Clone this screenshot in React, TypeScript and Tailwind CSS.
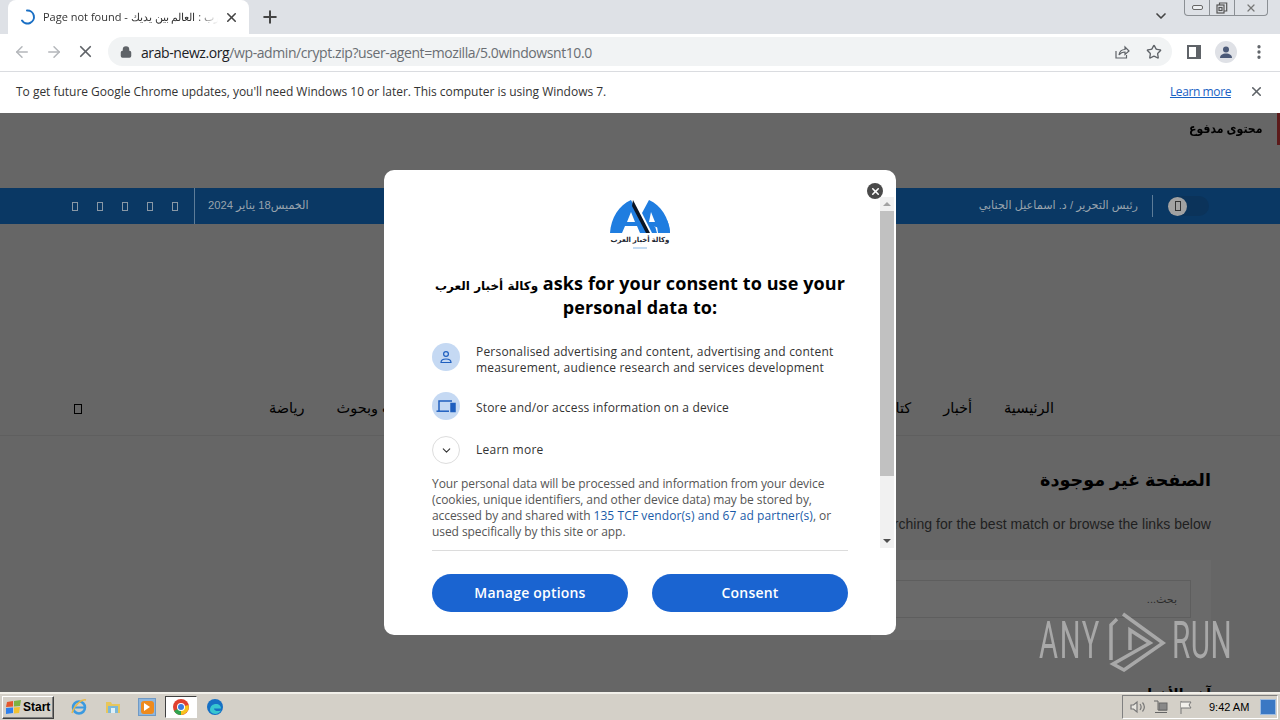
import { ArrowLeft, ArrowRight, ChevronDown, Lock, MoreVertical, Plus, Star, X } from "lucide-react";

function GlyphBox({ className }: { className: string }) {
  return <span className={`block border ${className}`} />;
}

function TabStrip() {
  return (
    <div className="h-[34px] bg-[#dee1e6] flex items-stretch relative shrink-0">
      <div className="ml-[8px] w-[241px] bg-white rounded-t-[8px] flex items-center pl-[12px] pr-[10px]">
        <svg width="16" height="16" viewBox="0 0 16 16" fill="none" className="shrink-0">
          <path d="M7 1.500A6.500 6.500 0 1 1 2 11.500" stroke="#1a6fc4" strokeWidth="2" strokeLinecap="round" />
        </svg>
        <div className="ml-[7px] w-[175px] mr-auto whitespace-nowrap overflow-hidden text-[11px] text-[#333] font-['Open_Sans',sans-serif] leading-[16px] [mask-image:linear-gradient(to_right,black_88%,transparent)]">
          Page not found - وكالة أخبار العرب : العالم بين يديك
        </div>
        <X size={15} strokeWidth={2.5} className="text-[#444] shrink-0" />
      </div>
      <div className="ml-[11px] flex items-center">
        <Plus size={20} strokeWidth={2.4} className="text-[#444]" />
      </div>
      <div className="flex-1" />
      <div className="flex items-center mr-[15px] mb-[2px]">
        <ChevronDown size={16} strokeWidth={2.5} className="text-[#444]" />
      </div>
      <div className="w-[84px] h-[16px] mr-[12px] border border-t-0 border-[#8b8f94] rounded-b-[4px] flex text-[#555]">
        <div className="w-[25px] border-r border-[#8b8f94] flex items-center justify-center">
          <span className="block w-[11px] h-[5px] border border-[#666] rounded-[2px] bg-[#eef0f3]" />
        </div>
        <div className="w-[25px] border-r border-[#8b8f94] flex items-center justify-center">
          <svg width="12" height="12" viewBox="0 0 12 12" fill="none" stroke="#555" strokeWidth="1.2">
            <rect x="1" y="3" width="7" height="8" />
            <path d="M3.500 3V1h7.200v8H8" />
            <rect x="3" y="5.500" width="3" height="3" />
          </svg>
        </div>
        <div className="flex-1 flex items-center justify-center">
          <X size={12} strokeWidth={2.5} className="text-[#777]" />
        </div>
      </div>
    </div>
  );
}

function Toolbar() {
  return (
    <div className="h-[38px] bg-white border-b border-[#dadce0] flex items-center shrink-0 pb-[2px]">
      <ArrowLeft size={18} strokeWidth={2} className="ml-[13px] text-[#b4b7bb]" />
      <ArrowRight size={18} strokeWidth={2} className="ml-[14px] text-[#b4b7bb]" />
      <X size={19} strokeWidth={2.2} className="ml-[13px] text-[#5f6368]" />
      <div className="ml-[13px] w-[1064px] h-[29px] rounded-full bg-[#f1f3f4] flex items-center pl-[12px] pr-[10px]">
        <Lock size={12} strokeWidth={3} className="text-[#5f6368] shrink-0" fill="#5f6368" />
        <div className="ml-[9px] pt-[1px] flex-1 text-[14px] whitespace-nowrap font-['Open_Sans',sans-serif] tracking-[-0.41px] text-[#6a6e73]">
          <span className="text-[#202124]">arab-newz.org</span>/wp-admin/crypt.zip?user-agent=mozilla/5.0windowsnt10.0
        </div>
        <svg width="16" height="16" viewBox="0 0 16 16" fill="none" stroke="#5f6368" strokeWidth="1.2" className="shrink-0">
          <path d="M2 7v7h10.500v-3" />
          <path d="M5 11c.5-3.500 3-5.500 6-5.500V3l4 4-4 3.500V8c-2.500 0-4.500 1-6 3z" />
        </svg>
        <Star size={16} strokeWidth={2} className="ml-[16px] text-[#5f6368] shrink-0" />
      </div>
      <div className="ml-[15px] w-[14px] h-[14px] border-2 border-[#5f6368] flex justify-start shrink-0">
        <span className="block w-[7px] h-full bg-white" />
        <span className="block w-[3px] h-full bg-[#5f6368]" />
      </div>
      <div className="ml-[14px] w-[22px] h-[22px] rounded-full bg-[#dfe1e6] flex items-center justify-center shrink-0">
        <svg width="14" height="14" viewBox="0 0 14 14" fill="#4c5a78">
          <circle cx="7" cy="4.500" r="3" />
          <path d="M1 13c0-3 2.500-4.500 6-4.500S13 10 13 13z" />
        </svg>
      </div>
      <MoreVertical size={18} strokeWidth={2.4} className="ml-[13px] text-[#5f6368] shrink-0" />
    </div>
  );
}

function InfoBar() {
  return (
    <div className="h-[41px] bg-white flex items-center pl-[16px] pr-[16px] pb-[2px] shrink-0 font-['Open_Sans',sans-serif] text-[12px]">
      <span className="text-[#333] flex-1 tracking-[-0.02px]">To get future Google Chrome updates, you'll need Windows 10 or later. This computer is using Windows 7.</span>
      <a className="text-[#1a62c4] underline tracking-[-0.4px]">Learn more</a>
      <X size={15} strokeWidth={2.5} className="ml-[18px] text-[#5f6368]" />
    </div>
  );
}

function PageBehind() {
  return (
    <div className="flex flex-col h-full font-['Liberation_Sans','DejaVu_Sans',sans-serif]">
      <div className="h-[75px] flex justify-end shrink-0">
        <div dir="rtl" className="text-[13px] font-bold text-black mr-[14px] mt-[6px] h-[20px] scale-x-[0.84] origin-right">محتوى مدفوع</div>
        <div className="w-[3px] h-[32px] bg-[#5c1a1a]" />
      </div>
      <div className="h-[36px] bg-[#0a3864] flex items-center justify-between shrink-0 pl-[72px] pr-[71px] text-[#98a3ad] text-[11.2px]">
        <div className="flex items-center">
          <div className="flex gap-[19px] pr-[16px] border-r border-[#5d7c98] h-[36px] items-center">
            <GlyphBox className="w-[6px] h-[9px] border-[#8a98a5]" />
            <GlyphBox className="w-[6px] h-[9px] border-[#8a98a5]" />
            <GlyphBox className="w-[6px] h-[9px] border-[#8a98a5]" />
            <GlyphBox className="w-[6px] h-[9px] border-[#8a98a5]" />
            <GlyphBox className="w-[6px] h-[9px] border-[#8a98a5]" />
          </div>
          <span dir="rtl" className="ml-[13px] mb-[1px]">الخميس18 يناير 2024</span>
        </div>
        <div className="flex items-center">
          <span dir="rtl" className="mb-[1px]">رئيس التحرير / د. اسماعيل الجنابي</span>
          <span className="block w-px h-[22px] bg-[#5d7c98] ml-[14px]" />
          <div className="ml-[15px] w-[41px] h-[20px] rounded-full bg-[#0b335a] flex items-center">
            <div className="w-[19px] h-[19px] rounded-full bg-[#a2a2a2] flex items-center justify-center">
              <GlyphBox className="w-[6px] h-[10px] border-[#333]" />
            </div>
          </div>
        </div>
      </div>
      <div className="h-[176px] shrink-0" />
      <div className="h-[36px] pb-[18px] border-b border-[#5f5f5f] flex items-center justify-between shrink-0 pl-[74px] pr-[226px] text-[14.5px] text-black">
        <GlyphBox className="w-[8px] h-[10px] border-black" />
        <div className="flex flex-1 justify-end items-center whitespace-nowrap pl-[187px]" dir="ltr">
          <span dir="rtl">رياضة</span>
          <span dir="rtl" className="ml-[32px]">دراسات وبحوث</span>
          <span className="flex-1" />
          <span dir="rtl">كتاب</span>
          <span dir="rtl" className="ml-[32px]">أخبار</span>
          <span dir="rtl" className="ml-[32px]">الرئيسية</span>
        </div>
      </div>
      <div className="flex-1 pr-[69px] flex flex-col items-end overflow-hidden">
        <h1 dir="rtl" className="mt-[30px] text-[17.6px] leading-[28px] font-bold text-black">الصفحة غير موجودة</h1>
        <p className="mt-[20px] text-[14px] leading-[20px] tracking-[0.04px] text-[#1f1f1f] whitespace-nowrap">Try searching for the best match or browse the links below</p>
        <div className="mt-[26px] w-[340px] h-[80px] bg-[#6a6a6a] p-[20px] shrink-0">
          <div dir="rtl" className="h-[38px] border border-[#5e5e5e] flex items-center pr-[13px] text-[11px] text-[#2a2a2a]">بحث...</div>
        </div>
        <div dir="rtl" className="mt-[44px] text-[14px] font-bold text-black whitespace-nowrap">آخر الأخبار</div>
      </div>
    </div>
  );
}

function Logo() {
  return (
    <div className="mt-[3px] h-[52px] w-[64px] flex flex-col items-center">
      <svg width="60" height="34" viewBox="0 0 60 34" className="shrink-0">
        <path d="M0 33C1 18 9 5 21 0L38 33H30L27 26H15L12 33z M17 22h8L21 12z" fill="#1f7de0" fillRule="evenodd" />
        <path d="M60 33C59 18 51 5 39 0L32 13L42 33H47L45 26H44z M39 22h6L41 12z" fill="#1f7de0" fillRule="evenodd" />
        <path d="M47 26L48 33H60C60 29 59 24 57 20z" fill="#1f7de0" />
        <path d="M23 0L40 33H36L22 6z" fill="#0c1524" />
      </svg>
      <div dir="rtl" className="text-[7px] leading-[11px] font-bold text-[#1d2530] whitespace-nowrap">وكالة أخبار العرب</div>
      <div className="w-[14px] h-[2px] mt-[2px] bg-[#c3dbf3]" />
    </div>
  );
}

function ConsentModal() {
  return (
    <div className="absolute left-[384px] top-[57px] w-[512px] h-[465px] bg-white rounded-[10px] flex flex-col font-['Open_Sans','DejaVu_Sans',sans-serif]">
      <div className="absolute right-[13px] top-[13px] w-[16px] h-[16px] rounded-full bg-[#4a4a4a] flex items-center justify-center">
        <X size={11} strokeWidth={3.5} className="text-white" />
      </div>
      <div className="mt-[27px] h-[353px] flex shrink-0">
        <div className="w-[496px] pl-[48px] pr-[32px] overflow-hidden">
          <div className="flex justify-center">
            <Logo />
          </div>
          <h2 className="mt-[19px] text-[18px] leading-[24px] font-bold text-black text-center tracking-[0.1px]">
            <span className="font-['DejaVu_Sans',sans-serif] text-[12px] leading-none">وكالة أخبار العرب</span> asks for your consent to use your personal data to:
          </h2>
          <div className="mt-[24px] flex items-start">
            <div className="w-[28px] h-[28px] rounded-full bg-[#c5d9f3] flex items-center justify-center shrink-0">
              <svg width="14" height="14" viewBox="0 0 14 14" fill="none" stroke="#1f5fbf" strokeWidth="1.200">
                <circle cx="7" cy="4" r="2.400" />
                <path d="M2 12.500c0-2.500 2-3.500 5-3.500s5 1 5 3.500z" />
              </svg>
            </div>
            <p className="ml-[16px] pt-[1px] text-[12px] leading-[16px] tracking-[0.2px] text-[#333]">Personalised advertising and content, advertising and content measurement, audience research and services development</p>
          </div>
          <div className="mt-[16px] flex items-start">
            <div className="w-[28px] h-[28px] rounded-full bg-[#c5d9f3] flex items-center justify-center shrink-0">
              <svg width="20" height="14" viewBox="0 0 20 14" fill="none" stroke="#1f5fbf" strokeWidth="1.500">
                <path d="M3 12V2h13" />
                <path d="M0.500 12.200H13" />
                <rect x="15" y="4.500" width="4" height="8" fill="#1f5fbf" />
              </svg>
            </div>
            <p className="ml-[16px] mt-[8px] text-[12px] leading-[16px] tracking-[0.17px] text-[#333]">Store and/or access information on a device</p>
          </div>
          <div className="mt-[16px] flex items-center">
            <div className="w-[28px] h-[28px] rounded-full border border-[#ddd] flex items-center justify-center shrink-0">
              <ChevronDown size={13} strokeWidth={2} className="text-[#333]" />
            </div>
            <p className="ml-[16px] text-[12px] leading-[16px] tracking-[0.25px] text-[#333]">Learn more</p>
          </div>
          <p className="mt-[12px] text-[12px] leading-[16px] tracking-[-0.07px] text-[#555]">
            Your personal data will be processed and information from your device (cookies, unique identifiers, and other device data) may be stored by, accessed by and shared with <span className="text-[#1a5ba8] tracking-[0.09px]">135 TCF vendor(s) and 67 ad partner(s)</span>, or used specifically by this site or app.
          </p>
        </div>
        <div className="w-[14px] h-[351px] bg-[#f1f1f1] flex flex-col items-center">
          <div className="h-[14px] flex items-center justify-center">
            <span className="block w-0 h-0 border-x-[4px] border-x-transparent border-b-[4px] border-b-[#a3a3a3]" />
          </div>
          <div className="w-full h-[265px] bg-[#c1c1c1]" />
          <div className="flex-1" />
          <div className="h-[14px] flex items-center justify-center">
            <span className="block w-0 h-0 border-x-[4px] border-x-transparent border-t-[4px] border-t-[#505050]" />
          </div>
        </div>
      </div>
      <div className="mx-[48px] border-t border-[#dcdcdc] pt-[23px] flex gap-[24px]">
        <button className="flex-1 h-[38px] pb-[2px] rounded-full bg-[#1a64d1] text-white text-[14px] font-semibold tracking-[0.2px]">Manage options</button>
        <button className="flex-1 h-[38px] pb-[2px] rounded-full bg-[#1a64d1] text-white text-[14px] font-semibold tracking-[0.2px]">Consent</button>
      </div>
    </div>
  );
}

function Watermark() {
  return (
    <div className="absolute left-[1039px] top-[497px] flex items-center text-[#a8a8a8] font-['Roboto',sans-serif]">
      <span className="text-[52px] leading-[60px] w-[65px] scale-x-[0.56] origin-left tracking-[3px]">ANY</span>
      <svg width="62" height="62" viewBox="0 0 62 62" fill="none" stroke="#a8a8a8" strokeWidth="3.500" className="ml-[4px]">
        <path d="M9 9L3 15V50" />
        <path d="M15 4L55 33L16 60L5 54L42 33L22 20V40" />
      </svg>
      <span className="ml-[2px] text-[52px] leading-[60px] scale-x-[0.57] origin-left tracking-[1px]">RUN</span>
    </div>
  );
}

function TaskBar() {
  return (
    <div className="h-[28px] bg-[#d4d0c8] border-t-2 border-[#f2f0ea] flex items-center shrink-0 font-['Liberation_Sans',sans-serif] relative">
      <div className="ml-[2px] w-[52px] h-[23px] border border-[#fff] border-r-[#404040] border-b-[#404040] shadow-[inset_-1px_-1px_0_#808080] flex items-center pl-[2px] text-[12px] font-bold text-black">
        <svg width="17" height="16" viewBox="0 0 17 16" className="shrink-0">
          <path d="M2 3l6-1v5.500L1 8z" fill="#e4572e" />
          <path d="M9 2l7-1-1 6-6 .5z" fill="#7cb342" />
          <path d="M1 9l7-.5V14l-7 1z" fill="#2f80ed" />
          <path d="M9 8.500l6-.5-1 6-5 .5z" fill="#f2c230" />
        </svg>
        <span className="ml-[1px]">Start</span>
      </div>
      <div className="ml-[16px] w-[18px] flex justify-center">
        <svg width="18" height="18" viewBox="0 0 18 18" fill="none">
          <circle cx="9" cy="9.500" r="6" stroke="#3b9ae0" strokeWidth="2.500" />
          <path d="M4 9.500h10" stroke="#3b9ae0" strokeWidth="2" />
          <path d="M2 15C5 6 12 1 16 2" stroke="#e9b949" strokeWidth="1.500" />
        </svg>
      </div>
      <div className="ml-[16px] w-[18px] flex justify-center">
        <svg width="18" height="16" viewBox="0 0 18 16">
          <path d="M2 3h5l1 2h8v9H2z" fill="#e8c65c" />
          <rect x="4" y="7" width="10" height="7" fill="#7db8d8" />
          <rect x="7" y="9" width="4" height="5" fill="#dff0f7" />
        </svg>
      </div>
      <div className="ml-[16px] w-[18px] h-[18px] bg-[#8fb6dd] border border-[#6f9ac6] flex items-center justify-center">
        <div className="w-[13px] h-[13px] rounded-[3px] bg-[#ee8a1d] flex items-center justify-center">
          <span className="block w-0 h-0 border-y-[4px] border-y-transparent border-l-[6px] border-l-white" />
        </div>
      </div>
      <div className="ml-[9px] w-[32px] h-[22px] bg-white border border-[#404040] border-r-white border-b-white flex items-center justify-center">
        <svg width="18" height="18" viewBox="0 0 18 18">
          <circle cx="9" cy="9" r="8" fill="#e0402f" />
          <path d="M9 9L2 13A8 8 0 0 0 9 17z" fill="#2fa44f" />
          <path d="M9 9l7.500-2A8 8 0 0 1 9 17z" fill="#f7c21c" />
          <circle cx="9" cy="9" r="4" fill="#fff" />
          <circle cx="9" cy="9" r="3" fill="#3a7be0" />
        </svg>
      </div>
      <div className="ml-[9px] w-[18px] flex justify-center">
        <svg width="18" height="18" viewBox="0 0 18 18">
          <circle cx="9" cy="9" r="8" fill="#1670c4" />
          <path d="M4 12c0-4 3-6 6-6 3 0 5 2 5 4.500H8c0 2 3 3.500 7 2-1.500 3-5 4-8 3-2-.7-3-2-3-3.500z" fill="#37c6d0" />
        </svg>
      </div>
      <div className="flex-1" />
      <div className="w-[156px] h-[24px] mr-[2px] border border-[#808080] border-r-white border-b-white flex items-center pl-[7px] text-[11px] text-black">
        <svg width="16" height="14" viewBox="0 0 16 14" fill="none" stroke="#777" strokeWidth="1.2">
          <path d="M1 5h2.500L7 2v10L3.500 9H1z" fill="#e8e6e0" />
          <path d="M10 4c1.500 2 1.500 4 0 6M12.500 2.500c2.500 3 2.500 6 0 9" />
        </svg>
        <svg width="16" height="16" viewBox="0 0 16 16" fill="none" stroke="#666" className="ml-[7px]">
          <path d="M1 2h4v9h9" />
          <rect x="6" y="4" width="8" height="7" fill="#888" />
          <path d="M2 13.500h12" />
        </svg>
        <svg width="14" height="15" viewBox="0 0 14 15" fill="none" stroke="#777" className="ml-[10px]">
          <path d="M2 1v13" />
          <path d="M2 2h10l-2 3 2 3H2" fill="#f3f1ec" />
        </svg>
        <span className="ml-[16px]">9:42 AM</span>
        <div className="ml-auto mr-[1px] w-[16px] h-[16px] bg-[#3a78c4] border border-[#9dbbe0]" />
      </div>
    </div>
  );
}

export default function App() {
  return (
    <div className="w-[1280px] h-[720px] overflow-hidden flex flex-col bg-[#666]">
      <TabStrip />
      <Toolbar />
      <InfoBar />
      <div className="relative flex-1 min-h-0 overflow-hidden bg-[#666]">
        <PageBehind />
        <ConsentModal />
        <Watermark />
      </div>
      <TaskBar />
    </div>
  );
}
